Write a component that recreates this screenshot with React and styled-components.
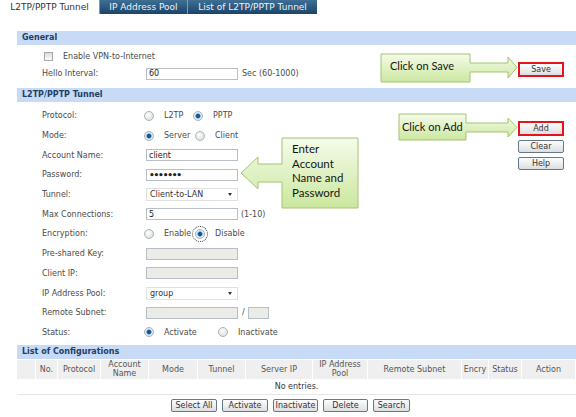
import React from "react";
import styled, { createGlobalStyle } from "styled-components";

const GlobalStyle = createGlobalStyle`
  html, body {
    margin: 0;
    padding: 0;
    background: #fff;
  }
  body {
    font-family: "DejaVu Sans", Verdana, sans-serif;
    font-size: 8px;
    color: #4a4a4a;
  }
`;

const Page = styled.div`
  position: relative;
  width: 576px;
  height: 417px;
  overflow: hidden;
`;

const TabBar = styled.div`
  display: flex;
  height: 14px;
`;

const Tab = styled.div`
  box-sizing: border-box;
  width: ${(p) => p.$w}px;
  height: 14px;
  display: flex;
  align-items: center;
  justify-content: center;
  font-size: 9px;
  color: ${(p) => (p.$active ? "#333" : "#eef4fa")};
  background: ${(p) =>
    p.$active ? "#fff" : "linear-gradient(#3f6f95, #1c4468)"};
  border-left: ${(p) => (p.$active ? "none" : "1px solid #7b9cb8")};
`;

const Content = styled.div`
  margin: 17px 0 0 17px;
`;

const SectionHeader = styled.div`
  height: 14px;
  line-height: 14px;
  padding-left: 5px;
  background: #c7dbf6;
  color: #1f3e63;
  font-weight: bold;
`;

const SectionBody = styled.div`
  display: flex;
  justify-content: space-between;
  padding: ${(p) => p.$pt}px 12px ${(p) => p.$pb}px 25px;
`;

const FormColumn = styled.div`
  display: flex;
  flex-direction: column;
`;

const Row = styled.div`
  display: flex;
  align-items: center;
  height: ${(p) => p.$h}px;
`;

const Label = styled.div`
  width: 104px;
  flex-shrink: 0;
`;

const Note = styled.span`
  margin-left: ${(p) => p.$ml || 4}px;
`;

const CheckBox = styled.span`
  box-sizing: border-box;
  width: 9px;
  height: 9px;
  margin: 0 10px 0 2px;
  border: 1px solid #a7a7a7;
  background: linear-gradient(#dcdcdc, #fbfbfb);
`;

const TextInput = styled.input`
  box-sizing: border-box;
  width: ${(p) => p.$w || 92}px;
  height: 12px;
  margin: 0;
  padding: 0 2px;
  border: 1px solid #b8bec5;
  font-family: "DejaVu Sans", Verdana, sans-serif;
  font-size: ${(p) => (p.$dots ? "9px" : "8px")};
  font-weight: ${(p) => (p.$dots ? "bold" : "normal")};
  letter-spacing: ${(p) => (p.$dots ? "-1.2px" : "0")};
  color: #222;
  background: ${(p) => (p.disabled ? "#ebebe7" : "#fff")};
  outline: none;
`;

const SelectBox = styled.div`
  box-sizing: border-box;
  width: 92px;
  height: 13px;
  display: flex;
  align-items: center;
  justify-content: space-between;
  padding: 0 5px 0 3px;
  border: 1px solid #e0e0e0;
  color: #333;
`;

const Caret = styled.span`
  width: 0;
  height: 0;
  border-left: 2.5px solid transparent;
  border-right: 2.5px solid transparent;
  border-top: 3px solid #333;
`;

const RadioOption = styled.span`
  display: inline-flex;
  align-items: center;
  width: ${(p) => (p.$w ? `${p.$w}px` : "auto")};
`;

const Radio = styled.span`
  box-sizing: border-box;
  width: 10px;
  height: 10px;
  margin: 0 10px 0 -2px;
  border-radius: 50%;
  border: 1px solid #adb3b8;
  background: ${(p) =>
    p.$on
      ? "radial-gradient(circle, #17578f 0 1.6px, #4f98d2 2.3px, #e9eef2 3px, #d0d6da 100%)"
      : "radial-gradient(circle at 40% 35%, #fdfdfd, #d2d7da)"};
  outline: ${(p) => (p.$focus ? "1px dotted #333" : "none")};
  outline-offset: 2px;
`;

const ButtonColumn = styled.div`
  display: flex;
  flex-direction: column;
  gap: 4px;
  padding-top: ${(p) => p.$top}px;
`;

const Button = styled.div`
  box-sizing: border-box;
  width: ${(p) => p.$w || 46}px;
  height: ${(p) => (p.$mark ? 15 : 13)}px;
  display: flex;
  align-items: center;
  justify-content: center;
  color: #333;
  border: ${(p) => (p.$mark ? "2px solid #e5141c" : "1px solid #65788a")};
  border-radius: ${(p) => (p.$mark ? 0 : 2)}px;
  background: linear-gradient(#fdfdfd, #dcdee0);
`;

const Table = styled.div`
  display: grid;
  grid-template-columns: 19px 22px 43px 48px 49px 48px 67px 55px 94px 27px 33px 1fr;
  margin-top: 1px;
`;

const HeadCell = styled.div`
  height: 19px;
  display: flex;
  align-items: center;
  justify-content: center;
  text-align: center;
  line-height: 9px;
  background: #efefef;
  border-right: 1px solid #fff;
  color: #555;
`;

const EmptyRow = styled.div`
  grid-column: 1 / -1;
  height: 15px;
  display: flex;
  align-items: center;
  justify-content: center;
  color: #333;
  border-bottom: 1px solid #e6e6e6;
`;

const ButtonBar = styled.div`
  display: flex;
  justify-content: center;
  gap: 5px;
  margin-top: 4px;
  padding-right: 12px;
`;

const CalloutWrap = styled.div`
  position: absolute;
  left: ${(p) => p.$x}px;
  top: ${(p) => p.$y}px;
  width: ${(p) => p.$w}px;
  height: ${(p) => p.$h}px;
`;

const CalloutShape = styled.svg`
  position: absolute;
  left: 0;
  top: 0;
  overflow: visible;
`;

const CalloutText = styled.div`
  position: absolute;
  left: ${(p) => p.$tx}px;
  top: ${(p) => p.$ty}px;
  font-family: Lato, "Open Sans", sans-serif;
  font-size: ${(p) => p.$fs}px;
  line-height: 14.7px;
  color: #151515;
  white-space: nowrap;
`;

const Callout = ({ id, x, y, w, h, d, tx, ty, fs = 12, children }) => (
  <CalloutWrap $x={x} $y={y} $w={w} $h={h}>
    <CalloutShape width={w} height={h} viewBox={`0 0 ${w} ${h}`}>
      <defs>
        <linearGradient id={id} x1="0" y1="0" x2="0" y2="1">
          <stop offset="0" stopColor="#f5fbea" />
          <stop offset="1" stopColor="#cbe79f" />
        </linearGradient>
      </defs>
      <path d={d} fill={`url(#${id})`} stroke="#a5c470" strokeWidth="1" />
    </CalloutShape>
    <CalloutText $tx={tx} $ty={ty} $fs={fs}>
      {children}
    </CalloutText>
  </CalloutWrap>
);

const RadioPair = ({ a, b, on, w, focus }) => (
  <>
    <RadioOption $w={w}>
      <Radio $on={on === 0} />
      {a}
    </RadioOption>
    <RadioOption>
      <Radio $on={on === 1} $focus={focus} />
      {b}
    </RadioOption>
  </>
);

const columns = [
  "",
  "No.",
  "Protocol",
  <>Account<br />Name</>,
  "Mode",
  "Tunnel",
  "Server IP",
  <>IP Address<br />Pool</>,
  "Remote Subnet",
  "Encry",
  "Status",
  "Action",
];

const RH = 19.7;

export default function App() {
  return (
    <Page>
      <GlobalStyle />
      <TabBar>
        <Tab $w={99} $active>L2TP/PPTP Tunnel</Tab>
        <Tab $w={88}>IP Address Pool</Tab>
        <Tab $w={130}>List of L2TP/PPTP Tunnel</Tab>
      </TabBar>

      <Content>
        <SectionHeader>General</SectionHeader>
        <SectionBody $pt={3} $pb={6}>
          <FormColumn>
            <Row $h={17}>
              <CheckBox />
              Enable VPN-to-Internet
            </Row>
            <Row $h={17}>
              <Label>Hello Interval:</Label>
              <TextInput readOnly value="60" />
              <Note>Sec (60-1000)</Note>
            </Row>
          </FormColumn>
          <ButtonColumn $top={14}>
            <Button $mark>Save</Button>
          </ButtonColumn>
        </SectionBody>

        <SectionHeader>L2TP/PPTP Tunnel</SectionHeader>
        <SectionBody $pt={4} $pb={2.6}>
          <FormColumn>
            <Row $h={RH}>
              <Label>Protocol:</Label>
              <RadioPair a="L2TP" b="PPTP" on={1} w={49} />
            </Row>
            <Row $h={RH}>
              <Label>Mode:</Label>
              <RadioPair a="Server" b="Client" on={0} w={51} />
            </Row>
            <Row $h={RH}>
              <Label>Account Name:</Label>
              <TextInput readOnly value="client" />
            </Row>
            <Row $h={RH}>
              <Label>Password:</Label>
              <TextInput readOnly $dots value="•••••••" />
            </Row>
            <Row $h={RH}>
              <Label>Tunnel:</Label>
              <SelectBox>
                Client-to-LAN
                <Caret />
              </SelectBox>
            </Row>
            <Row $h={RH}>
              <Label>Max Connections:</Label>
              <TextInput readOnly value="5" />
              <Note $ml={3}>(1-10)</Note>
            </Row>
            <Row $h={RH}>
              <Label>Encryption:</Label>
              <RadioPair a="Enable" b="Disable" on={1} w={51} focus />
            </Row>
            <Row $h={RH}>
              <Label>Pre-shared Key:</Label>
              <TextInput disabled value="" />
            </Row>
            <Row $h={RH}>
              <Label>Client IP:</Label>
              <TextInput disabled value="" />
            </Row>
            <Row $h={RH}>
              <Label>IP Address Pool:</Label>
              <SelectBox>
                group
                <Caret />
              </SelectBox>
            </Row>
            <Row $h={RH}>
              <Label>Remote Subnet:</Label>
              <TextInput disabled value="" />
              <Note>/</Note>
              <Note $ml={3}>
                <TextInput disabled $w={21} value="" />
              </Note>
            </Row>
            <Row $h={RH}>
              <Label>Status:</Label>
              <RadioPair a="Activate" b="Inactivate" on={0} w={74} />
            </Row>
          </FormColumn>
          <ButtonColumn $top={15}>
            <Button $mark>Add</Button>
            <Button>Clear</Button>
            <Button>Help</Button>
          </ButtonColumn>
        </SectionBody>

        <SectionHeader>List of Configurations</SectionHeader>
        <Table>
          {columns.map((c, i) => (
            <HeadCell key={i}>{c}</HeadCell>
          ))}
          <EmptyRow>No entries.</EmptyRow>
        </Table>
        <ButtonBar>
          <Button $w={46}>Select All</Button>
          <Button $w={46}>Activate</Button>
          <Button $w={45}>Inactivate</Button>
          <Button $w={45}>Delete</Button>
          <Button $w={37}>Search</Button>
        </ButtonBar>
      </Content>

      <Callout
        id="gSave"
        x={380}
        y={53}
        w={140}
        h={31}
        d="M1,1 H90 V10 H128 V4 L137,14.5 L128,25 V19 H90 V29 H1 Z"
        tx={10}
        ty={6}
        fs={11}
      >
        Click on Save
      </Callout>
      <Callout
        id="gAdd"
        x={398}
        y={113}
        w={122}
        h={29}
        d="M1,1 H68 V10 H110 V5 L119,14.5 L110,24 V19 H68 V27 H1 Z"
        tx={4}
        ty={7}
        fs={11}
      >
        Click on Add
      </Callout>
      <Callout
        id="gEnter"
        x={240}
        y={137}
        w={120}
        h={73}
        d="M42,1 H118 V71 H42 V45 H18 V52 L1,36 L18,20 V27 H42 Z"
        tx={52}
        ty={5}
        fs={11.5}
      >
        Enter
        <br />
        Account
        <br />
        Name and
        <br />
        Password
      </Callout>
    </Page>
  );
}
